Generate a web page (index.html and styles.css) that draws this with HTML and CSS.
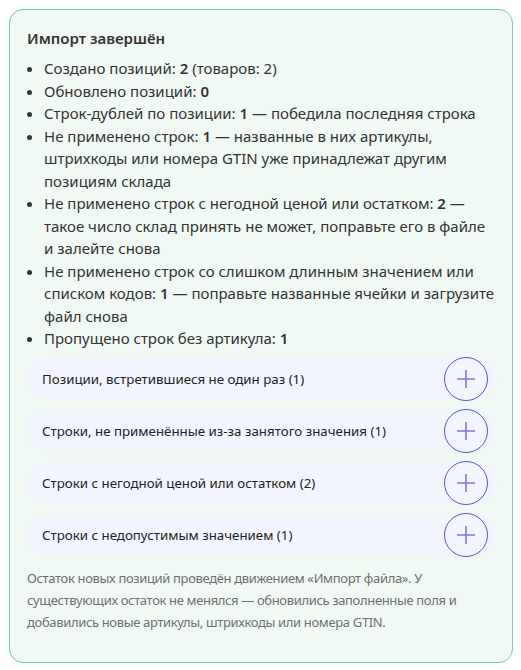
FILE: index.html
```html
<!DOCTYPE html>
<html lang="ru">
  <head>
    <meta charset="UTF-8" />
    <meta name="viewport" content="width=device-width, initial-scale=1.0" />
    <title>Импорт завершён</title>
    <link rel="stylesheet" href="styles.css">
  </head>
  <body>
    <div class="result-card">
      <div class="result-title">Импорт завершён</div>

      <ul class="result-list">
        <li>Создано позиций: <b>2</b> (товаров: 2)</li>
        <li>Обновлено позиций: <b>0</b></li>
        <li>Строк-дублей по позиции: <b>1</b> — победила последняя строка</li>
        <li>Не применено строк: <b>1</b> — названные в них артикулы, штрихкоды или номера GTIN уже принадлежат другим позициям склада</li>
        <li>Не применено строк с негодной ценой или остатком: <b>2</b> — такое число склад принять не может, поправьте его в файле и залейте снова</li>
        <li>Не применено строк со слишком длинным значением или списком кодов: <b>1</b> — поправьте названные ячейки и загрузите файл снова</li>
        <li>Пропущено строк без артикула: <b>1</b></li>
      </ul>

      <div class="details">
        <div class="details-row">
          <span class="details-label">Позиции, встретившиеся не один раз (1)</span>
          <button class="toggle-btn" aria-label="Раскрыть">
            <svg width="20" height="20" viewBox="0 0 20 20">
              <path d="M1 10H19M10 1V19" />
            </svg>
          </button>
        </div>
        <div class="details-row">
          <span class="details-label">Строки, не применённые из-за занятого значения (1)</span>
          <button class="toggle-btn" aria-label="Раскрыть">
            <svg width="20" height="20" viewBox="0 0 20 20">
              <path d="M1 10H19M10 1V19" />
            </svg>
          </button>
        </div>
        <div class="details-row">
          <span class="details-label">Строки с негодной ценой или остатком (2)</span>
          <button class="toggle-btn" aria-label="Раскрыть">
            <svg width="20" height="20" viewBox="0 0 20 20">
              <path d="M1 10H19M10 1V19" />
            </svg>
          </button>
        </div>
        <div class="details-row">
          <span class="details-label">Строки с недопустимым значением (1)</span>
          <button class="toggle-btn" aria-label="Раскрыть">
            <svg width="20" height="20" viewBox="0 0 20 20">
              <path d="M1 10H19M10 1V19" />
            </svg>
          </button>
        </div>
      </div>

      <p class="result-note">
        Остаток новых позиций проведён движением «Импорт файла». У существующих остаток не менялся — обновились заполненные поля и добавились новые артикулы, штрихкоды или номера GTIN.
      </p>
    </div>
  </body>
</html>
```

FILE: styles.css
```css
* {
  margin: 0;
  padding: 0;
  box-sizing: border-box;
}
body {
  margin: 9px 8px 8px 9px;
  background: #fff;
  color: #333;
  font-family: "Noto Sans", "Open Sans", sans-serif;
}
.result-card {
  background: #f1f9f4;
  border: 1px solid #72cf98;
  border-radius: 14px;
  padding: 17px 15px 29px 17px;
}
.result-title {
  font-size: 15px;
  font-weight: 600;
  line-height: 22px;
  margin-bottom: 8px;
}
.result-list {
  font-size: 15px;
  line-height: 22.5px;
  padding-left: 17px;
  margin-bottom: 9px;
}
.result-list b {
  font-weight: 600;
}
.details {
  display: flex;
  flex-direction: column;
  gap: 12px;
}
.details-row {
  display: flex;
  align-items: center;
  justify-content: space-between;
  height: 40px;
  padding: 0 9px 0 15px;
  background: #f2f5fd;
  border-radius: 20px;
}
.details-label {
  font-size: 13.3px;
  color: #222;
}
.toggle-btn {
  width: 44px;
  height: 44px;
  flex-shrink: 0;
  border: 1.5px solid #5656d4;
  border-radius: 50%;
  background: transparent;
  display: flex;
  align-items: center;
  justify-content: center;
  cursor: pointer;
}
.toggle-btn path {
  stroke: #7a78e4;
  stroke-width: 1.6;
  fill: none;
}
.result-note {
  margin-top: 12px;
  font-size: 13px;
  line-height: 22px;
  letter-spacing: -0.35px;
  color: #6f6f6f;
}
```
